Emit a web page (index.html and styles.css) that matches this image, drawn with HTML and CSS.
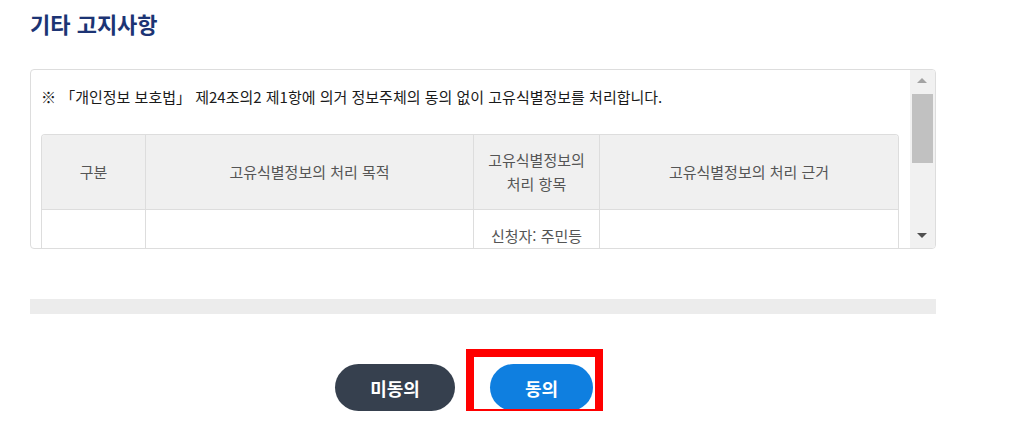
FILE: index.html
```html
<!DOCTYPE html>
<html lang="ko">
<head>
    <meta charset="UTF-8">
    <meta name="viewport" content="width=device-width, initial-scale=1.0">
    <title>기타 고지사항</title>
    <link rel="stylesheet" href="styles.css">
</head>
<body>

    <div class="container">
        <h2 class="title">기타 고지사항</h2>

        <div class="notice-box">
            <div class="notice-content">
                <p class="notice-text">※ 「개인정보 보호법」 제24조의2 제1항에 의거 정보주체의 동의 없이 고유식별정보를 처리합니다.</p>
                <table class="notice-table">
                    <thead>
                        <tr>
                            <th class="col-type">구분</th>
                            <th class="col-purpose">고유식별정보의 처리 목적</th>
                            <th class="col-item">고유식별정보의<br>처리 항목</th>
                            <th class="col-basis">고유식별정보의 처리 근거</th>
                        </tr>
                    </thead>
                    <tbody>
                        <tr>
                            <td></td>
                            <td></td>
                            <td>신청자: 주민등</td>
                            <td></td>
                        </tr>
                    </tbody>
                </table>
            </div>
            <div class="scrollbar">
                <span class="arrow-up"></span>
                <div class="thumb"></div>
                <span class="arrow-down"></span>
            </div>
        </div>

        <div class="divider"></div>

        <div class="buttons">
            <button type="button" class="btn btn-disagree">미동의</button>
            <div class="btn-wrap">
                <button type="button" class="btn btn-agree">동의</button>
                <span class="highlight"></span>
            </div>
        </div>
    </div>

</body>
</html>
```

FILE: styles.css
```css
body {
    font-family: "Noto Sans CJK KR", "Noto Sans", sans-serif;
    margin: 0;
    padding: 0;
    background-color: #fff;
    color: #222;
}

.container {
    padding: 0 30px;
    width: 906px;
}

.title {
    margin: 0;
    padding-top: 7px;
    font-size: 22px;
    line-height: 32px;
    font-weight: bold;
    color: #1c3474;
}

.notice-box {
    display: flex;
    margin-top: 30px;
    height: 178px;
    border: 1px solid #ddd;
    border-radius: 4px;
    overflow: hidden;
}

.notice-content {
    flex: 1;
    overflow: hidden;
    padding: 15px 11px 0 10px;
}

.notice-text {
    margin: 0 0 25px;
    font-size: 15px;
    line-height: 24px;
    color: #1a1a1a;
}

.notice-table {
    width: 858px;
    border-collapse: separate;
    border-spacing: 0;
    border: 1px solid #ddd;
    border-bottom: none;
    border-radius: 4px 4px 0 0;
    table-layout: fixed;
    font-size: 15px;
    line-height: 24px;
    color: #555;
}

.notice-table th,
.notice-table td {
    text-align: center;
    vertical-align: middle;
    font-weight: normal;
    border-right: 1px solid #ddd;
    padding: 0;
}

.notice-table th:last-child,
.notice-table td:last-child {
    border-right: none;
}

.notice-table th {
    background-color: #f0f0f0;
    height: 74px;
    border-bottom: 1px solid #ddd;
}

.notice-table th:first-child {
    border-top-left-radius: 3px;
}

.notice-table th:last-child {
    border-top-right-radius: 3px;
}

.notice-table td {
    padding-top: 14px;
    vertical-align: top;
    height: 40px;
}

.col-type { width: 103px; }
.col-purpose { width: 327px; }
.col-item { width: 125px; }

.scrollbar {
    position: relative;
    width: 25px;
    background-color: #f1f1f1;
}

.thumb {
    margin: 24px 2px 0 2px;
    height: 69px;
    background-color: #c1c1c1;
}

.arrow-up,
.arrow-down {
    position: absolute;
    left: 7px;
    width: 0;
    height: 0;
    border-left: 5px solid transparent;
    border-right: 5px solid transparent;
}

.arrow-up {
    top: 8px;
    border-bottom: 5px solid #a3a3a3;
}

.arrow-down {
    bottom: 10px;
    border-top: 5px solid #505050;
}

.divider {
    margin-top: 50px;
    height: 15px;
    background-color: #ececec;
}

.buttons {
    display: flex;
    gap: 35px;
    margin-top: 50px;
    padding-left: 305px;
}

.btn {
    height: 47px;
    border: none;
    border-radius: 24px;
    color: #fff;
    font-family: inherit;
    font-size: 18px;
    font-weight: bold;
    cursor: pointer;
}

.btn-disagree {
    width: 120px;
    background-color: #36404e;
}

.btn-agree {
    width: 103px;
    background-color: #0f7fe0;
}

.btn-wrap {
    position: relative;
}

.highlight {
    position: absolute;
    left: -24px;
    top: -15px;
    width: 121px;
    height: 52px;
    border: 8px solid #ff0000;
}
```
